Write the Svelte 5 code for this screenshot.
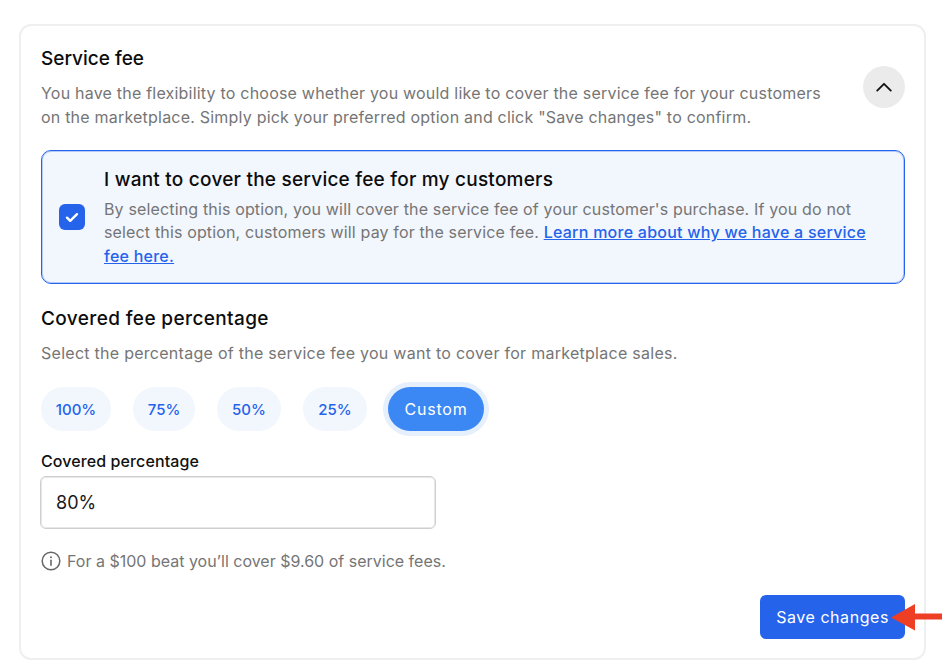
<script>
  const options = [
    { label: '100%', width: 70 },
    { label: '75%', width: 62 },
    { label: '50%', width: 64 },
    { label: '25%', width: 64 }
  ];
</script>

<main class="page">
  <section class="card">
    <header class="head">
      <div class="intro">
        <h2>Service fee</h2>
        <p>You have the flexibility to choose whether you would like to cover the service fee for your customers on the marketplace. Simply pick your preferred option and click "Save changes" to confirm.</p>
      </div>
      <button class="collapse" aria-label="Collapse">
        <svg width="16" height="10" viewBox="0 0 16 10" fill="none"><path d="M1.2 8.6 8 1.8l6.8 6.8" stroke="#111" stroke-width="1.8" stroke-linecap="round" stroke-linejoin="round"/></svg>
      </button>
    </header>

    <div class="cover">
      <span class="check">
        <svg width="14" height="11" viewBox="0 0 14 11" fill="none"><path d="M2 5.7 5.2 8.8 12 2.2" stroke="#fff" stroke-width="2.4" stroke-linecap="round" stroke-linejoin="round"/></svg>
      </span>
      <div class="cover-text">
        <h3>I want to cover the service fee for my customers</h3>
        <p>By selecting this option, you will cover the service fee of your customer's purchase. If you do not select this option, customers will pay for the service fee. <a href="#fee">Learn more about why we have a service fee here.</a></p>
      </div>
    </div>

    <h3 class="sub">Covered fee percentage</h3>
    <p class="sub-desc">Select the percentage of the service fee you want to cover for marketplace sales.</p>

    <div class="pills">
      {#each options as o}
        <button class="pill" style="width: {o.width}px">{o.label}</button>
      {/each}
      <button class="pill active">Custom</button>
    </div>

    <label class="field">
      <span>Covered percentage</span>
      <input value="80%" />
    </label>

    <p class="info">
      <svg width="20" height="20" viewBox="0 0 20 20" fill="none"><circle cx="10" cy="10" r="8.8" stroke="#666" stroke-width="1.5"/><path d="M10 9.2v5" stroke="#666" stroke-width="1.6" stroke-linecap="round"/><circle cx="10" cy="6.3" r="1" fill="#666"/></svg>
      For a $100 beat you’ll cover $9.60 of service fees.
    </p>

    <div class="actions">
      <button class="save">Save changes</button>
    </div>
  </section>

  <svg class="arrow" width="51" height="27" viewBox="0 0 51 27" fill="none"><path d="M0 13.5 24 0V9.5H51V15.5H24V26.5Z" fill="#ee3f24"/></svg>
</main>

<style>
  :global(body) { margin: 0; background: #fff; }
  .page {
    position: relative;
    height: 664px;
    overflow: hidden;
    padding: 24px 16px 0 19px;
    box-sizing: border-box;
    font-family: Inter, "Liberation Sans", sans-serif;
  }
  .card {
    height: 636px;
    box-sizing: border-box;
    border: 2px solid #efefef;
    border-radius: 12px;
    padding: 20px 19px 20px 20px;
    background: #fff;
  }
  h2, h3, p { margin: 0; }
  .head { display: flex; align-items: flex-start; justify-content: space-between; }
  .intro { width: 790px; }
  h2 { font-size: 19px; line-height: 26px; font-weight: 500; color: #0c0c0c; }
  .intro p { margin-top: 9px; font-size: 16px; line-height: 24px; letter-spacing: 0.21px; color: #757575; }
  .collapse {
    width: 42px; height: 42px; border: 0; border-radius: 50%; background: #ebebeb;
    display: flex; align-items: center; justify-content: center; padding: 0;
    margin-top: 20px;
  }
  .cover {
    margin-top: 21px;
    height: 134px;
    box-sizing: border-box;
    border: 1px solid #2563eb;
    box-shadow: inset 0 0 0 1px rgba(37, 99, 235, 0.3);
    border-radius: 10px;
    background: #f2f6fd;
    display: flex;
    align-items: center;
    gap: 19px;
    padding: 0 17px;
  }
  .check {
    flex: none; width: 26px; height: 26px; border-radius: 6px; background: #2563eb;
    display: flex; align-items: center; justify-content: center;
  }
  .cover-text { width: 770px; padding-top: 2px; }
  .cover-text h3 { font-size: 19px; line-height: 24px; font-weight: 500; letter-spacing: 0.23px; color: #0c0c0c; }
  .cover-text p { margin-top: 6px; font-size: 16px; line-height: 23.5px; letter-spacing: 0.15px; color: #757575; }
  a { color: #2563eb; font-weight: 500; letter-spacing: 0.25px; text-decoration: underline; }
  .sub { margin-top: 22px; font-size: 19px; line-height: 26px; font-weight: 500; letter-spacing: 0.38px; color: #0c0c0c; }
  .sub-desc { margin-top: 9px; font-size: 16px; line-height: 24px; letter-spacing: 0.27px; color: #757575; }
  .pills { display: flex; align-items: center; gap: 22px; margin-top: 22px; }
  .pill {
    height: 44px; border: 0; border-radius: 22px; background: #f2f6fd; color: #2563eb;
    font: 500 15px Inter, "Liberation Sans", sans-serif; padding: 0;
  }
  .active {
    width: 96px; margin-left: -1px; background: #3b88f5; color: #fff; font-size: 16px; font-weight: 400; letter-spacing: 0.8px;
    box-shadow: 0 0 0 5px #e6effc;
  }
  .field { display: flex; flex-direction: column; margin-top: 19px; width: 395px; }
  .field span { font-size: 16px; line-height: 22px; font-weight: 500; letter-spacing: 0.1px; color: #111; }
  input {
    margin: 4px 0 0 -1px; height: 53px; box-sizing: border-box; border: 1px solid #cfcfcf;
    box-shadow: inset 0 0 0 1px rgba(207, 207, 207, 0.5); border-radius: 6px;
    padding: 0 15px; font: 400 18px Inter, "Liberation Sans", sans-serif; color: #1a1a1a; outline: none;
  }
  .info { display: flex; align-items: center; gap: 6px; margin-top: 20px; font-size: 16px; line-height: 24px; color: #757575; }
  .actions { display: flex; justify-content: flex-end; margin-top: 22px; }
  .save {
    width: 145px; height: 44px; border: 0; border-radius: 6px; background: #2563eb; color: #fff;
    font: 400 16px Inter, "Liberation Sans", sans-serif; letter-spacing: 0.55px; padding: 0;
  }
  .arrow { position: absolute; left: 891px; top: 604px; }
</style>
